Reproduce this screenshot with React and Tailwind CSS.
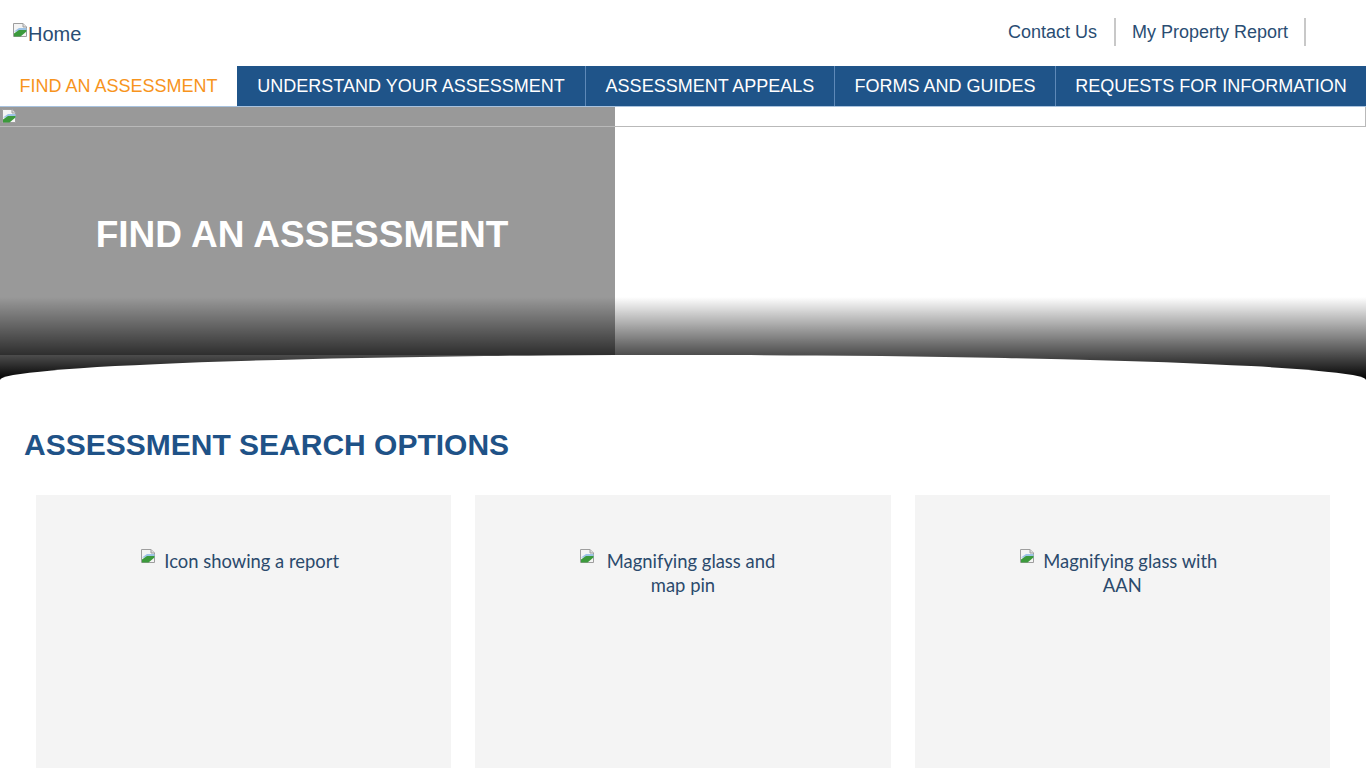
import React from "react";

function BrokenIcon({ className = "" }) {
  return (
    <svg viewBox="0 0 16 16" width="16" height="16" className={className}>
      <path d="M1.5 1.5h9.5l3.5 3.5v9.5h-13z" fill="#f4f4f4" stroke="#9e9e9e" />
      <path d="M11 1.5v3.5h3.5" fill="#dedede" stroke="#9e9e9e" />
      <path d="M2 9.5l5-3.5l7.5 0v4z" fill="#9cc3e6" />
      <path d="M2 14.5v-3l5-3.5 7.5 0v1.5l-6 5z" fill="#3c9a3c" />
    </svg>
  );
}

const tabs = [
  { t: "UNDERSTAND YOUR ASSESSMENT", w: "w-[348px]" },
  { t: "ASSESSMENT APPEALS", w: "w-[249px]" },
  { t: "FORMS AND GUIDES", w: "w-[221px]" },
  { t: "REQUESTS FOR INFORMATION", w: "w-[311px]" },
];

function Card({ text }) {
  return (
    <div className="bg-[#f4f4f4] h-[300px] pt-[54px]">
      <div
        className="w-[207px] mx-auto text-center text-[18.4px] leading-[24px] text-[#2b4a6c]"
        style={{ fontFamily: "Lato, 'Open Sans', sans-serif" }}
      >
        <BrokenIcon className="float-left mt-[-1px]" />
        {text}
      </div>
    </div>
  );
}

export default function App() {
  const arial = { fontFamily: "'Liberation Sans', Arial, sans-serif" };
  return (
    <div className="w-[1366px] bg-white overflow-hidden" style={arial}>
      {/* header */}
      <div className="h-[66px] flex items-start justify-between">
        <div className="pl-[12px] pt-[21px] flex items-start text-[20px] leading-[26px] text-[#2a4d73]">
          <BrokenIcon className="mt-[1px]" />
          <span>Home</span>
        </div>
        <div className="flex items-center pt-[18px] pr-[60px] text-[18px] text-[#2a4d73]">
          <span className="px-[17px] h-[28px] flex items-center">Contact Us</span>
          <span className="w-[2px] h-[28px] bg-[#c8c8c8]" />
          <span className="px-[16px] h-[28px] flex items-center">My Property Report</span>
          <span className="w-[2px] h-[28px] bg-[#c8c8c8]" />
        </div>
      </div>
      {/* nav */}
      <div className="flex h-[41px] border-b border-[#a9c3df]">
        <div className="w-[237px] shrink-0 flex items-center justify-center text-[18px] text-[#f7941d]">
          FIND AN ASSESSMENT
        </div>
        {tabs.map((x, i) => (
          <div
            key={x.t}
            className={
              x.w +
              " shrink-0 flex items-center justify-center text-[18px] text-white bg-[#1f5489] whitespace-nowrap" +
              (i > 0 ? " border-l border-[#5e89b8]" : "")
            }
          >
            {x.t}
          </div>
        ))}
      </div>
      {/* hero */}
      <div className="relative h-[273px] flex">
        <div className="w-[615px] h-[248px] bg-[#999999] flex items-center justify-center pt-[8px] pr-[11px]">
          <h1 className="text-[37px] font-bold text-white">FIND AN ASSESSMENT</h1>
        </div>
        <div className="flex-1" />
        <div className="absolute left-0 right-0 top-0 h-[20px] border border-[#b9b9b9] border-l-0 border-t-0">
          <BrokenIcon className="absolute left-[1px] top-[1px]" />
        </div>
        <div className="absolute left-0 right-0 top-[190px] bottom-0 bg-gradient-to-b from-transparent to-black" />
        <div className="absolute left-0 w-[1366px] top-[248px] h-[50px] bg-white rounded-[50%]" />
      </div>
      {/* content */}
      <div className="px-[24px] pt-[47px]">
        <h2 className="text-[30px] font-bold text-[#1f5287] leading-[36px]">ASSESSMENT SEARCH OPTIONS</h2>
      </div>
      <div className="grid grid-cols-3 gap-[24px] px-[36px] pt-[32px]">
        <Card text="Icon showing a report" />
        <Card text="Magnifying glass and map pin" />
        <Card text="Magnifying glass with AAN" />
      </div>
    </div>
  );
}
